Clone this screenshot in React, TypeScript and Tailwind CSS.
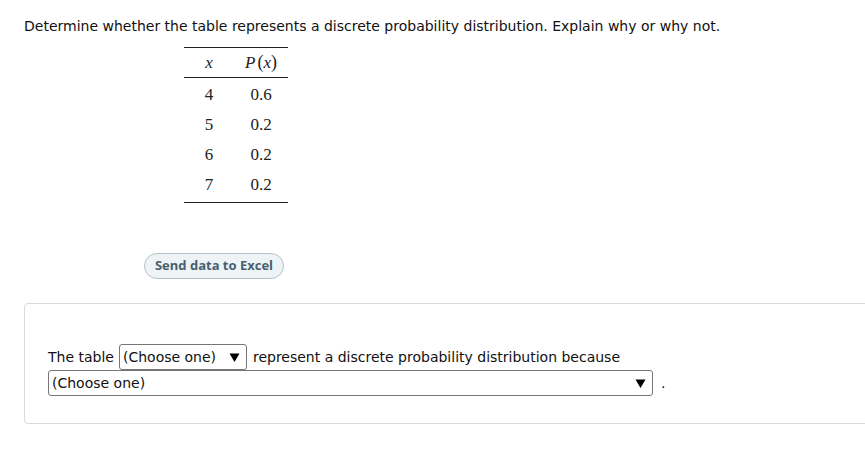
import React from "react";

const Tri = () => (
  <svg width="11" height="11" viewBox="0 0 11 11" className="shrink-0">
    <polygon points="0.5,1.5 10.5,1.5 5.5,10" fill="#000" />
  </svg>
);

export default function App() {
  return (
    <div className="w-[865px] h-[474px] bg-white overflow-hidden relative" style={{ fontFamily: '"DejaVu Sans", Verdana, sans-serif' }}>
      <div className="pt-[17px] pl-[24px] text-[14px] leading-[18px] text-[#111]">
        Determine whether the table represents a discrete probability distribution. Explain why or why not.
      </div>
      <div className="ml-[184px] mt-[12px] w-[104px] border-t border-b border-[#222]" style={{ fontFamily: '"Liberation Serif", "Times New Roman", serif' }}>
        <div className="flex h-[30px] items-center border-b border-[#222] text-[17px] text-[#222]">
          <div className="w-[50px] text-center italic">x</div>
          <div className="w-[54px] text-center">
            <span className="italic">P</span>
            <span className="ml-[2px] text-[18px]">(</span>
            <span className="italic">x</span>
            <span className="text-[18px]">)</span>
          </div>
        </div>
        <div className="py-[2px]">
          {[["4", "0.6"], ["5", "0.2"], ["6", "0.2"], ["7", "0.2"]].map(([a, b]) => (
            <div key={a} className="flex h-[30px] items-center text-[17px] text-[#222]">
              <div className="w-[50px] text-center">{a}</div>
              <div className="w-[54px] text-center">{b}</div>
            </div>
          ))}
        </div>
      </div>
      <div className="ml-[144px] mt-[50px]">
        <button className="h-[26px] w-[140px] rounded-full border border-[#b4c2ca] bg-[#eef3f6] text-[13px] font-bold text-[#45606f]" style={{ fontFamily: '"Open Sans", Lato, sans-serif' }}>
          Send data to Excel
        </button>
      </div>
      <div className="ml-[24px] mt-[24px] w-[860px] h-[121px] border border-[#dadada] rounded-[4px] pt-[40px] pl-[23px] text-[14px] text-[#111]">
        <div className="flex items-center h-[26px]">
          <span>The table</span>
          <div className="ml-[5px] h-[26px] w-[128px] border border-[#767676] rounded-[3px] flex items-center justify-between pl-[3px] pr-[6px]">
            <span>(Choose one)</span>
            <Tri />
          </div>
          <span className="ml-[6px]">represent a discrete probability distribution because</span>
        </div>
        <div className="flex items-center h-[26px]">
          <div className="h-[26px] w-[605px] border border-[#767676] rounded-[3px] flex items-center justify-between pl-[3px] pr-[6px]">
            <span>(Choose one)</span>
            <Tri />
          </div>
          <span className="ml-[8px]">.</span>
        </div>
      </div>
    </div>
  );
}
